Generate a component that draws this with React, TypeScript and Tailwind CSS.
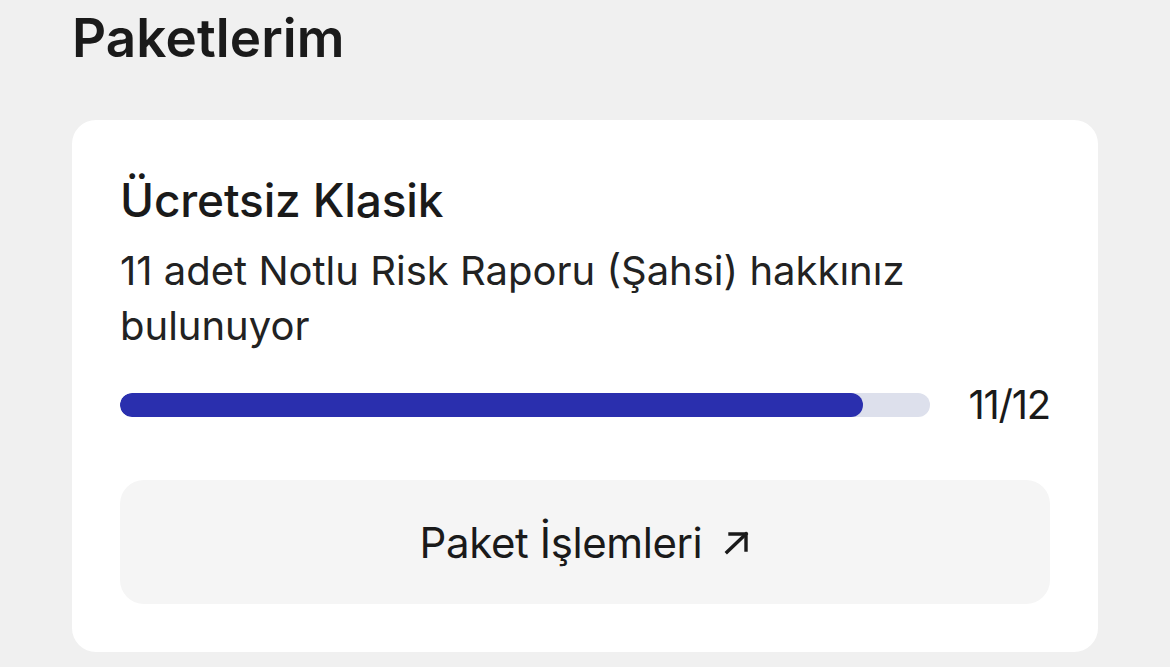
export default function App() {
  const used = 11;
  const total = 12;

  return (
    <div
      className="min-h-[667px] w-full bg-[#f0f0f0] px-[72px] text-[#1a1a1a]"
      style={{ fontFamily: "Inter, 'Noto Sans', sans-serif" }}
    >
      {/* Header */}
      <h1 className="pt-[6px] text-[53px] font-semibold leading-[64px] tracking-[0.1px]">
        Paketlerim
      </h1>

      {/* Package card */}
      <div className="mt-[50px] rounded-[24px] bg-white px-[48px] pt-[52px] pb-[48px]">
        <h2 className="text-[46px] font-medium leading-[56px] tracking-[-0.15px]">
          Ücretsiz Klasik
        </h2>
        <p className="mt-[15px] text-[40px] leading-[55px] tracking-[0px] text-[#222]">
          11 adet Notlu Risk Raporu (Şahsi) hakkınız bulunuyor
        </p>

        {/* Progress */}
        <div className="mt-[32px] flex items-center gap-[38px]">
          <div className="h-[24px] flex-1 overflow-hidden rounded-full bg-[#dde0ec]">
            <div
              className="h-full rounded-full bg-[#2a2fae]"
              style={{ width: `${(used / total) * 100}%` }}
            />
          </div>
          <span className="text-[40px] leading-[40px] tracking-[-1.2px]">
            {used}/{total}
          </span>
        </div>

        {/* Action button */}
        <button className="mt-[55px] flex h-[124px] w-full items-center justify-center gap-[22px] rounded-[24px] bg-[#f5f5f5] text-[42px] tracking-[-0.4px] text-[#1a1a1a]">
          Paket İşlemleri
          <svg
            width="26"
            height="24"
            viewBox="0 0 26 24"
            fill="none"
            stroke="currentColor"
            strokeWidth="3.4"
            strokeLinecap="square"
            className="mt-[2px]"
          >
            <path d="M3 21 L22 3" />
            <path d="M6 3 H22 V19" />
          </svg>
        </button>
      </div>
    </div>
  );
}
